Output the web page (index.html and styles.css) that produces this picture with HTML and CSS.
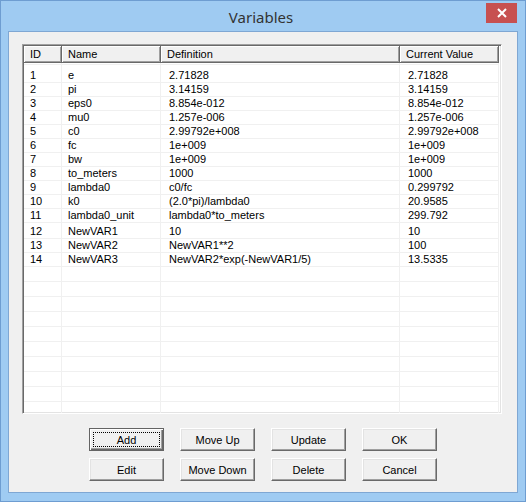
FILE: index.html
```html
<!DOCTYPE html>
<html lang="en">
<head>
<meta charset="UTF-8">
<title>Variables</title>
<link rel="stylesheet" href="styles.css">
</head>
<body>
<div class="window">
    <div class="titlebar">
        <span class="title">Variables</span>
        <button class="close" aria-label="Close">
            <svg width="10" height="10" viewBox="0 0 10 10"><path d="M1 1L9 9M9 1L1 9" stroke="#fff" stroke-width="2"/></svg>
        </button>
    </div>

    <div class="client">
        <div class="listbox">
            <div class="list-head">
                <div>ID</div>
                <div>Name</div>
                <div>Definition</div>
                <div>Current Value</div>
            </div>
            <div class="list-body">
                <div class="row spacer"><div></div><div></div><div></div><div></div></div>
                <div class="row first"><div>1</div><div>e</div><div>2.71828</div><div>2.71828</div></div>
                <div class="row"><div>2</div><div>pi</div><div>3.14159</div><div>3.14159</div></div>
                <div class="row"><div>3</div><div>eps0</div><div>8.854e-012</div><div>8.854e-012</div></div>
                <div class="row"><div>4</div><div>mu0</div><div>1.257e-006</div><div>1.257e-006</div></div>
                <div class="row"><div>5</div><div>c0</div><div>2.99792e+008</div><div>2.99792e+008</div></div>
                <div class="row"><div>6</div><div>fc</div><div>1e+009</div><div>1e+009</div></div>
                <div class="row"><div>7</div><div>bw</div><div>1e+009</div><div>1e+009</div></div>
                <div class="row"><div>8</div><div>to_meters</div><div>1000</div><div>1000</div></div>
                <div class="row"><div>9</div><div>lambda0</div><div>c0/fc</div><div>0.299792</div></div>
                <div class="row"><div>10</div><div>k0</div><div>(2.0*pi)/lambda0</div><div>20.9585</div></div>
                <div class="row"><div>11</div><div>lambda0_unit</div><div>lambda0*to_meters</div><div>299.792</div></div>
                <div class="row tall"><div>12</div><div>NewVAR1</div><div>10</div><div>10</div></div>
                <div class="row"><div>13</div><div>NewVAR2</div><div>NewVAR1**2</div><div>100</div></div>
                <div class="row"><div>14</div><div>NewVAR3</div><div>NewVAR2*exp(-NewVAR1/5)</div><div>13.5335</div></div>
                <div class="row empty"><div></div><div></div><div></div><div></div></div>
                <div class="row empty"><div></div><div></div><div></div><div></div></div>
                <div class="row empty"><div></div><div></div><div></div><div></div></div>
                <div class="row empty"><div></div><div></div><div></div><div></div></div>
                <div class="row empty"><div></div><div></div><div></div><div></div></div>
                <div class="row empty"><div></div><div></div><div></div><div></div></div>
                <div class="row empty"><div></div><div></div><div></div><div></div></div>
                <div class="row empty"><div></div><div></div><div></div><div></div></div>
                <div class="row empty"><div></div><div></div><div></div><div></div></div>
                <div class="row empty"><div></div><div></div><div></div><div></div></div>
            </div>
        </div>

        <div class="buttons">
            <button class="btn default"><span>Add</span></button>
            <button class="btn">Move Up</button>
            <button class="btn">Update</button>
            <button class="btn">OK</button>
            <button class="btn">Edit</button>
            <button class="btn">Move Down</button>
            <button class="btn">Delete</button>
            <button class="btn">Cancel</button>
        </div>
    </div>
</div>
</body>
</html>
```

FILE: styles.css
```css
body {
    margin: 0;
    padding: 0;
    font-family: "Liberation Sans", Arial, sans-serif;
    font-size: 11px;
    background-color: #fff;
}

.window {
    width: 526px;
    height: 502px;
    box-sizing: border-box;
    border: 1px solid #6e9dd1;
    background-color: #9fcbf2;
    padding: 0 7px 8px;
    display: flex;
    flex-direction: column;
}

/* barra de titulo */
.titlebar {
    position: relative;
    height: 30px;
    flex: 0 0 30px;
    display: flex;
    justify-content: center;
    align-items: center;
    padding: 2px 4px 0 0;
    box-sizing: border-box;
}

.title {
    font-family: "Noto Sans", "Open Sans", sans-serif;
    font-size: 15px;
    color: #333;
}

.close {
    position: absolute;
    top: 2px;
    right: 1px;
    width: 31px;
    height: 20px;
    border: none;
    padding: 0;
    background-color: #c75050;
    display: flex;
    justify-content: center;
    align-items: center;
}

.client {
    flex: 1;
    border: 1px solid #7fa7d3;
    background-color: #f0f0f0;
    padding: 12px 0 0 13px;
}

/* lista de variaveis */
.listbox {
    width: 480px;
    height: 370px;
    box-sizing: border-box;
    border: 1px solid;
    border-color: #a0a0a0 #fff #fff #a0a0a0;
    box-shadow: inset 1px 1px #696969, inset -1px -1px #e3e3e3;
    padding: 1px;
    background-color: #fff;
    overflow: hidden;
}

.list-head,
.row {
    display: grid;
    grid-template-columns: 38px 99px 239px 99px;
}

.list-head div {
    height: 17px;
    box-sizing: border-box;
    padding: 2px 0 0 6px;
    background-color: #f0f0f0;
    border-right: 1px solid #696969;
    border-bottom: 1px solid #696969;
    box-shadow: inset 1px 1px #fff, inset -1px -1px #a0a0a0;
    white-space: nowrap;
}

.row div {
    height: 14px;
    box-sizing: border-box;
    padding-left: 6px;
    line-height: 13px;
    border-right: 1px solid #f0f0f0;
    border-bottom: 1px solid #f0f0f0;
    white-space: nowrap;
    overflow: hidden;
}

.row div:nth-child(3),
.row div:nth-child(4) {
    padding-left: 8px;
}

.row.spacer div {
    height: 2px;
}

.row.first div {
    height: 18px;
    padding-top: 4px;
}

.row.tall div {
    height: 16px;
    padding-top: 2px;
}

.row.empty div {
    height: 15px;
}

/* botoes */
.buttons {
    margin: 14px 0 0 67px;
    display: grid;
    grid-template-columns: repeat(4, 75px);
    column-gap: 16px;
    row-gap: 7px;
}

.btn {
    height: 23px;
    padding: 0;
    font-family: "Liberation Sans", Arial, sans-serif;
    font-size: 11px;
    color: #000;
    background-color: #f0f0f0;
    border: 1px solid;
    border-color: #fff #696969 #696969 #fff;
    box-shadow: inset -1px -1px #a0a0a0, inset 1px 1px #e3e3e3;
}

.btn.default {
    border: 1px solid #646464;
    box-shadow: inset 1px 1px #fff, inset -1px -1px #696969, inset -2px -2px #a0a0a0;
    display: flex;
    padding: 3px;
}

.btn.default span {
    flex: 1;
    border: 1px dotted #000;
    display: flex;
    justify-content: center;
    align-items: center;
}
```
